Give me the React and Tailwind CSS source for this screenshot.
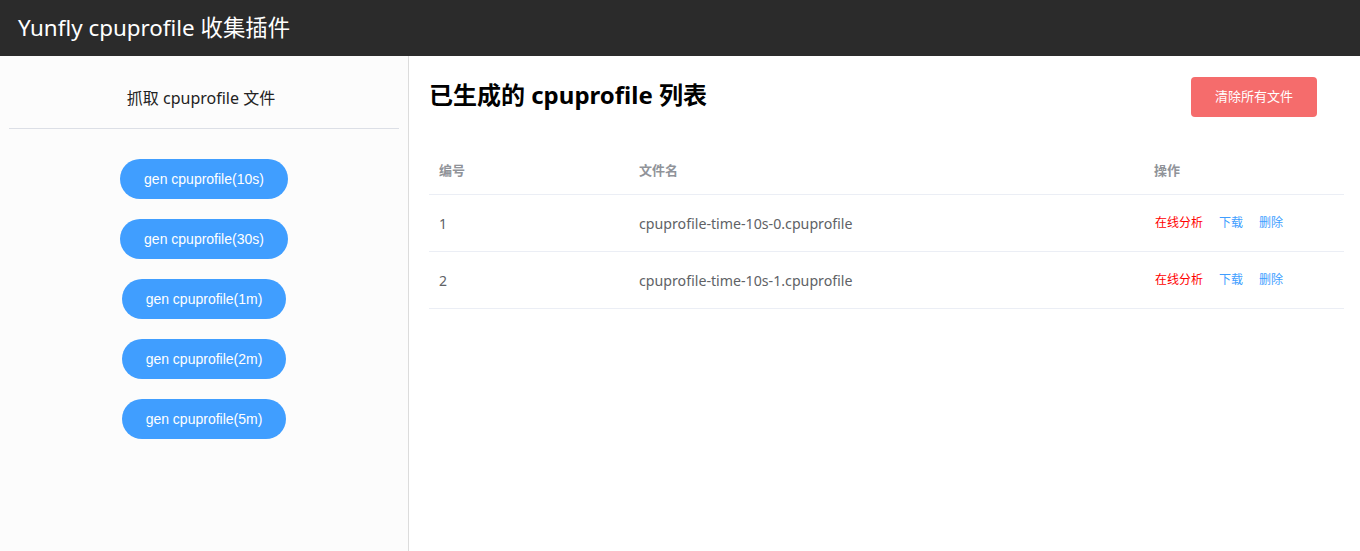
import React from "react";

const durations = ["10s", "30s", "1m", "2m", "5m"];
const files = [
  { id: 1, name: "cpuprofile-time-10s-0.cpuprofile" },
  { id: 2, name: "cpuprofile-time-10s-1.cpuprofile" },
];

const cjk = "font-['Noto_Sans','Noto_Sans_CJK_SC',sans-serif]";

export default function App() {
  return (
    <div className={`h-[551px] flex flex-col ${cjk}`}>
      <header className="h-[56px] shrink-0 bg-[#2b2b2b] flex items-center px-[18px]">
        <h1 className="text-white text-[22.4px] leading-none">Yunfly cpuprofile 收集插件</h1>
      </header>

      <div className="flex flex-1 min-h-0">
        <aside className="w-[409px] shrink-0 bg-[#fcfcfc] border-r border-[#dcdcdc] px-[9px]">
          <div className="h-[73px] flex items-center justify-center border-b border-[#dcdfe6]">
            <span className="text-[16px] text-[#222] pt-[12px] pr-[6px]">抓取 cpuprofile 文件</span>
          </div>
          <div className="flex flex-col items-center gap-[20px] pt-[30px]">
            {durations.map((d) => (
              <button
                key={d}
                className="h-[40px] px-[24px] rounded-full bg-[#409eff] text-white text-[14px] font-['Liberation_Sans',Arial,sans-serif]"
              >
                gen cpuprofile({d})
              </button>
            ))}
          </div>
        </aside>

        <main className="flex-1 bg-white pl-[20px] pr-[16px] pt-[21px]">
          <div className="flex items-start justify-between">
            <h2 className="text-[24px] font-bold text-black leading-[36px]">已生成的 cpuprofile 列表</h2>
            <button className="mr-[27px] h-[40px] w-[126px] rounded-[4px] bg-[#f56c6c] text-white text-[13px]">
              清除所有文件
            </button>
          </div>

          <table className="w-full mt-[30px] text-left border-collapse">
            <thead>
              <tr className="border-b border-[#ebeef5]">
                <th className="w-[200px] px-[10px] h-[47px] text-[13px] font-bold text-[#909399]">编号</th>
                <th className="w-[515px] px-[10px] h-[47px] text-[13px] font-bold text-[#909399]">文件名</th>
                <th className="px-[10px] h-[47px] text-[13px] font-bold text-[#909399]">操作</th>
              </tr>
            </thead>
            <tbody>
              {files.map((f) => (
                <tr key={f.id} className="border-b border-[#ebeef5]">
                  <td className="px-[10px] h-[57px] pt-[2px] text-[14px] text-[#606266]">{f.id}</td>
                  <td className="px-[10px] h-[57px] pt-[2px] text-[14.2px] text-[#606266]">{f.name}</td>
                  <td className="px-[10px] h-[57px] pt-px text-[12px]">
                    <div className="flex gap-[16px] pl-px">
                      <a className="text-[#ff0000] cursor-pointer">在线分析</a>
                      <a className="text-[#409eff] cursor-pointer">下载</a>
                      <a className="text-[#409eff] cursor-pointer">删除</a>
                    </div>
                  </td>
                </tr>
              ))}
            </tbody>
          </table>
        </main>
      </div>
    </div>
  );
}
